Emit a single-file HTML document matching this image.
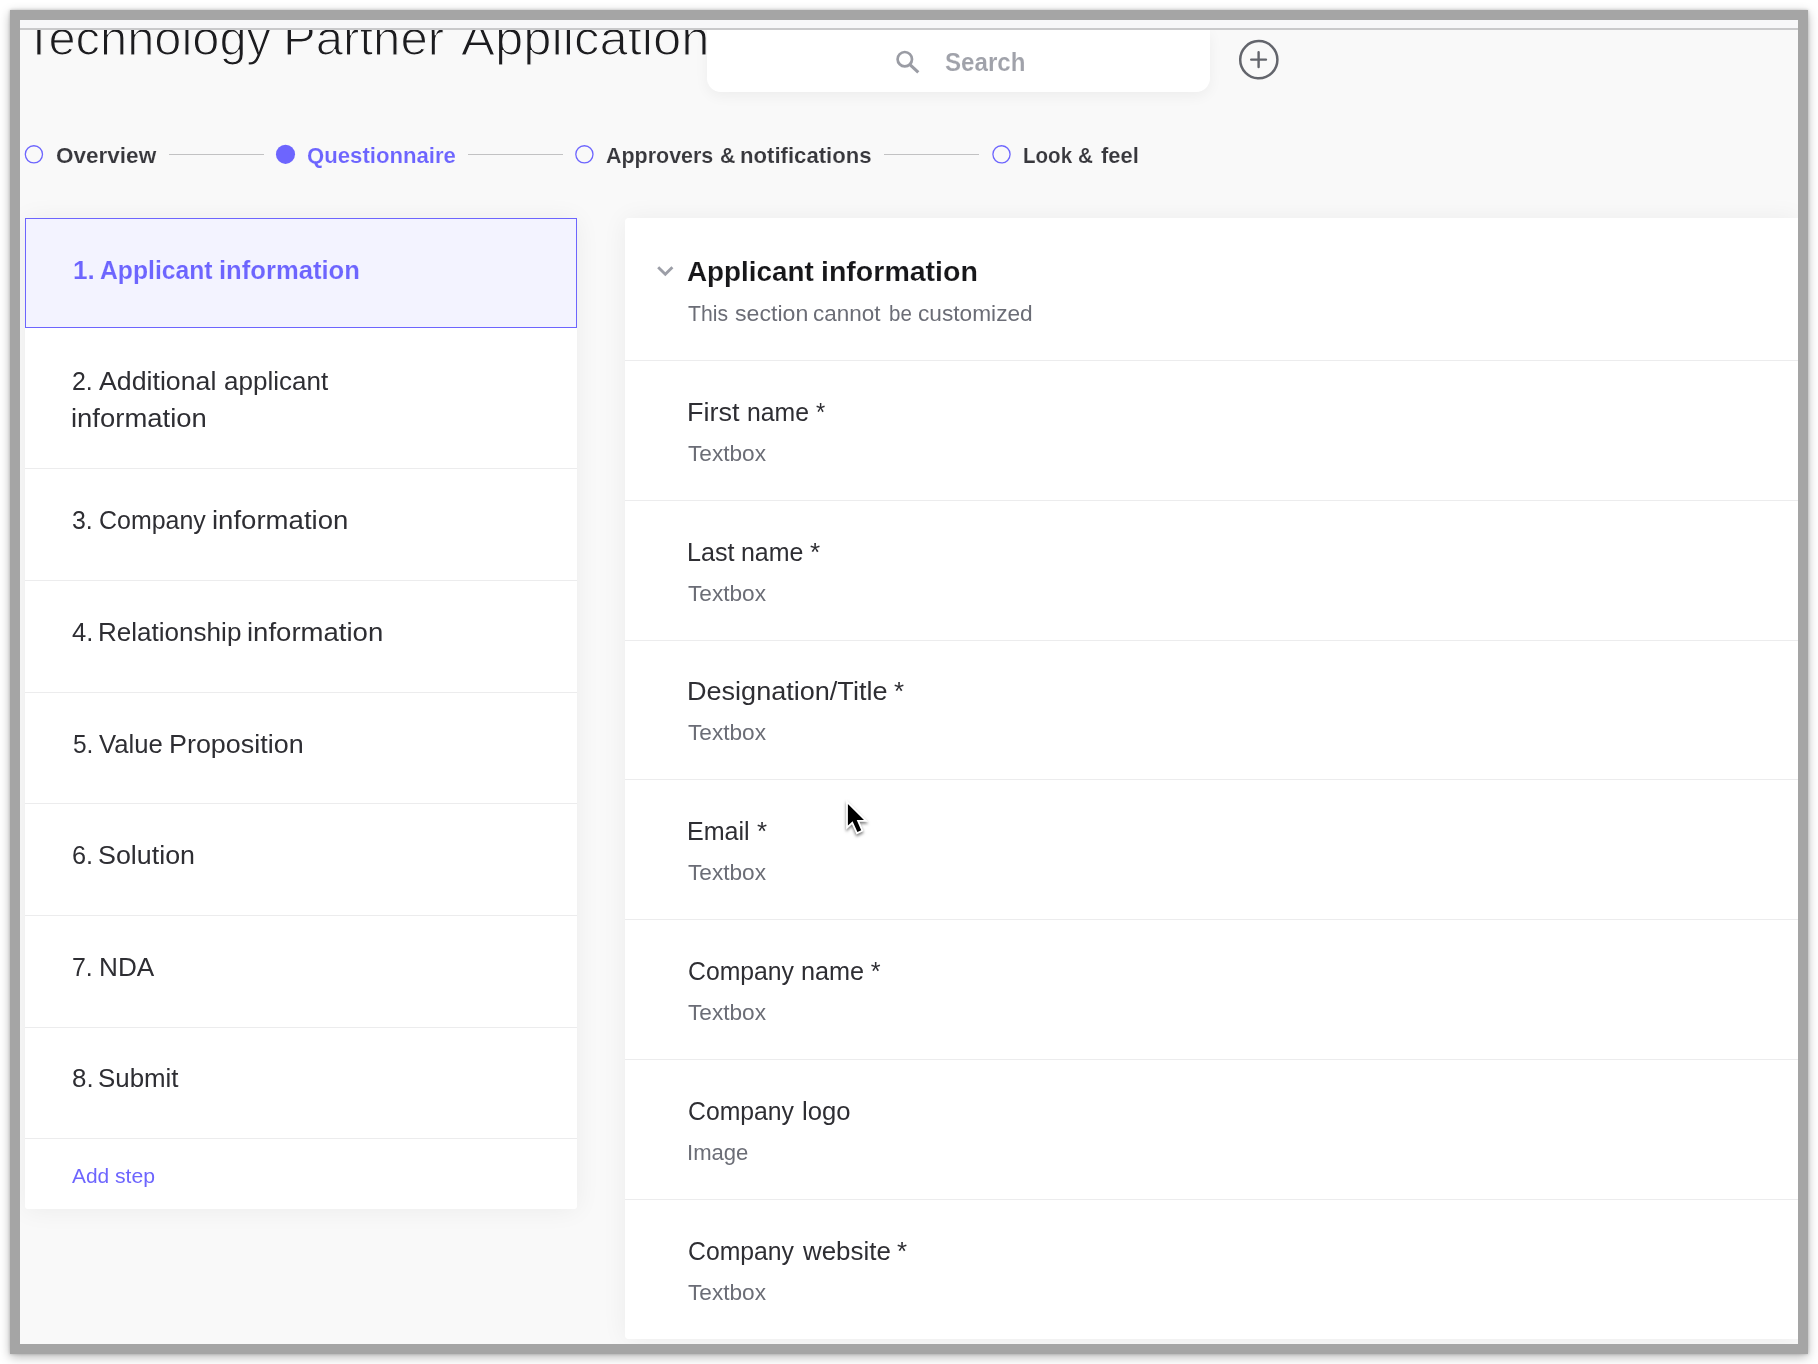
<!DOCTYPE html><html lang="en"><head><meta charset="utf-8"><title>Technology Partner Application</title><style>
*{box-sizing:border-box;margin:0;padding:0}
html,body{width:1818px;height:1364px;overflow:hidden;background:#fff}
body{position:relative;font-family:"Liberation Sans",sans-serif}
#frame{position:absolute;left:10px;top:10px;width:1798px;height:1344px;border:10px solid #a5a5a5;background:#f9f9f9;box-shadow:0 3px 10px rgba(0,0,0,.28),0 0 3px rgba(0,0,0,.2);overflow:hidden}
#in{position:absolute;left:-20px;top:-20px;width:1818px;height:1364px;will-change:transform}
.abs{position:absolute}
.tx{position:absolute;white-space:nowrap;transform-origin:0 0;line-height:1;display:block}
</style></head><body>
<div id="frame"><div id="in">
<div class="abs" style="z-index:5;left:20px;top:20px;width:1778px;height:8px;background:#f7f7f9"></div>
<div class="abs" style="z-index:5;left:20px;top:28px;width:1778px;height:2px;background:#c9c9cb"></div>
<div class="abs" style="left:707px;top:30px;width:503px;height:62px;background:#fff;border-radius:0 0 14px 14px;box-shadow:0 4px 14px rgba(0,0,0,.05)"></div>
<svg class="abs" style="left:890px;top:45px" width="36" height="36" viewBox="0 0 36 36"><circle cx="14.8" cy="14.2" r="7.2" fill="none" stroke="#9a9ca4" stroke-width="2.7"/><path d="M20.2 19.8 L28.3 27.4" stroke="#9a9ca4" stroke-width="3.1" fill="none"/></svg>
<svg class="abs" style="left:1236px;top:38px" width="44" height="44" viewBox="0 0 44 44"><circle cx="22.8" cy="21.7" r="18.6" fill="none" stroke="#63656c" stroke-width="2.5"/><path d="M15.2 21.6H30M22.6 14.2V29" stroke="#63656c" stroke-width="2.4" stroke-linecap="round" fill="none"/></svg>
<svg class="abs" style="left:20px;top:140px" width="1000" height="30" viewBox="20 140 1000 30"><circle cx="33.9" cy="154.35" r="8.6" fill="none" stroke="#6d65fe" stroke-width="1.3"/><circle cx="285.5" cy="154.35" r="9.55" fill="#6d65fe"/><circle cx="584.4" cy="154.35" r="8.6" fill="none" stroke="#6d65fe" stroke-width="1.3"/><circle cx="1001.5" cy="154.35" r="8.6" fill="none" stroke="#6d65fe" stroke-width="1.3"/></svg>
<div class="abs" style="left:169px;top:154px;width:95px;height:1px;background:#c2c2c3"></div>
<div class="abs" style="left:468px;top:154px;width:95px;height:1px;background:#c2c2c3"></div>
<div class="abs" style="left:884px;top:154px;width:94.5px;height:1px;background:#c2c2c3"></div>
<div class="abs" style="left:25px;top:218px;width:552px;height:991px;background:#fff;border-radius:3px;box-shadow:0 1px 26px rgba(0,0,0,.06)"></div>
<div class="abs" style="left:25px;top:218px;width:552px;height:110px;background:#f3f3ff;border:1px solid #6d65fe"></div>
<div class="abs" style="left:25px;top:468px;width:552px;height:1px;background:#ececed"></div>
<div class="abs" style="left:25px;top:580px;width:552px;height:1px;background:#ececed"></div>
<div class="abs" style="left:25px;top:692px;width:552px;height:1px;background:#ececed"></div>
<div class="abs" style="left:25px;top:803px;width:552px;height:1px;background:#ececed"></div>
<div class="abs" style="left:25px;top:915px;width:552px;height:1px;background:#ececed"></div>
<div class="abs" style="left:25px;top:1027px;width:552px;height:1px;background:#ececed"></div>
<div class="abs" style="left:25px;top:1138px;width:552px;height:1px;background:#ececed"></div>
<div class="abs" style="left:625px;top:218px;width:1173px;height:1121px;background:#fff;border-radius:4px 0 0 4px;box-shadow:0 1px 26px rgba(0,0,0,.06)"></div>
<div class="abs" style="left:625px;top:360px;width:1173px;height:1px;background:#ececed"></div>
<div class="abs" style="left:625px;top:500px;width:1173px;height:1px;background:#ececed"></div>
<div class="abs" style="left:625px;top:640px;width:1173px;height:1px;background:#ececed"></div>
<div class="abs" style="left:625px;top:779px;width:1173px;height:1px;background:#ececed"></div>
<div class="abs" style="left:625px;top:919px;width:1173px;height:1px;background:#ececed"></div>
<div class="abs" style="left:625px;top:1059px;width:1173px;height:1px;background:#ececed"></div>
<div class="abs" style="left:625px;top:1199px;width:1173px;height:1px;background:#ececed"></div>
<svg class="abs" style="left:650px;top:258px" width="30" height="26" viewBox="0 0 30 26"><path d="M8.2 9.2 L15.3 16.2 L22.4 9.2" fill="none" stroke="#9c9ea7" stroke-width="2.9"/></svg>
<div class="ln">
<span class="tx" style="left:24.34px;top:15.09px;font-size:47.5px;font-weight:400;color:#1c1c1f;transform:scaleX(1.0279);-webkit-text-stroke:1.2px #f9f9f9">Technology</span>
 
<span class="tx" style="left:283.43px;top:15.09px;font-size:47.5px;font-weight:400;color:#1c1c1f;transform:scaleX(1.0342);-webkit-text-stroke:1.2px #f9f9f9">Partner</span>
 
<span class="tx" style="left:460.83px;top:15.09px;font-size:47.5px;font-weight:400;color:#1c1c1f;transform:scaleX(1.0697);-webkit-text-stroke:1.2px #f9f9f9">Application</span>
</div>
<div class="ln">
<span class="tx" style="left:944.87px;top:49.09px;font-size:26px;font-weight:700;color:#a0a2aa;transform:scaleX(0.9274);-webkit-text-stroke:0.12px #fff">Search</span>
</div>
<div class="ln">
<span class="tx" style="left:55.71px;top:143.84px;font-size:22.75px;font-weight:700;color:#38383d;transform:scaleX(0.9900);-webkit-text-stroke:0.12px #f9f9f9">Overview</span>
</div>
<div class="ln">
<span class="tx" style="left:307.03px;top:143.84px;font-size:22.75px;font-weight:700;color:#6d65fe;transform:scaleX(0.9735);-webkit-text-stroke:0.12px #f9f9f9">Questionnaire</span>
</div>
<div class="ln">
<span class="tx" style="left:606.46px;top:143.84px;font-size:22.75px;font-weight:700;color:#38383d;transform:scaleX(0.9429);-webkit-text-stroke:0.12px #f9f9f9">Approvers</span>
 
<span class="tx" style="left:719.57px;top:143.84px;font-size:22.75px;font-weight:700;color:#38383d;transform:scaleX(0.9333);-webkit-text-stroke:0.12px #f9f9f9">&amp;</span>
 
<span class="tx" style="left:740.25px;top:143.84px;font-size:22.75px;font-weight:700;color:#38383d;transform:scaleX(0.9727);-webkit-text-stroke:0.12px #f9f9f9">notifications</span>
</div>
<div class="ln">
<span class="tx" style="left:1022.79px;top:143.84px;font-size:22.75px;font-weight:700;color:#38383d;transform:scaleX(0.9038);-webkit-text-stroke:0.12px #f9f9f9">Look</span>
 
<span class="tx" style="left:1078.39px;top:143.84px;font-size:22.75px;font-weight:700;color:#38383d;transform:scaleX(0.9067);-webkit-text-stroke:0.12px #f9f9f9">&amp;</span>
 
<span class="tx" style="left:1100.80px;top:143.84px;font-size:22.75px;font-weight:700;color:#38383d;transform:scaleX(0.9632);-webkit-text-stroke:0.12px #f9f9f9">feel</span>
</div>
<div class="ln">
<span class="tx" style="left:72.99px;top:257.29px;font-size:26px;font-weight:700;color:#6d65fe;transform:scaleX(1.0056);-webkit-text-stroke:0.12px #f3f3ff">1.</span>
 
<span class="tx" style="left:99.55px;top:257.29px;font-size:26px;font-weight:700;color:#6d65fe;transform:scaleX(0.9504);-webkit-text-stroke:0.12px #f3f3ff">Applicant</span>
 
<span class="tx" style="left:218.53px;top:257.29px;font-size:26px;font-weight:700;color:#6d65fe;transform:scaleX(0.9856);-webkit-text-stroke:0.12px #f3f3ff">information</span>
</div>
<div class="ln">
<span class="tx" style="left:72.24px;top:368.29px;font-size:26px;font-weight:400;color:#2e2e33;transform:scaleX(0.9579)">2.</span>
 
<span class="tx" style="left:99.30px;top:368.29px;font-size:26px;font-weight:400;color:#2e2e33;transform:scaleX(1.0274)">Additional</span>
 
<span class="tx" style="left:224.00px;top:368.29px;font-size:26px;font-weight:400;color:#2e2e33;transform:scaleX(1.0010)">applicant</span>
</div>
<div class="ln">
<span class="tx" style="left:71.39px;top:404.79px;font-size:26px;font-weight:400;color:#2e2e33;transform:scaleX(1.0560)">information</span>
</div>
<div class="ln">
<span class="tx" style="left:72.24px;top:507.09px;font-size:26px;font-weight:400;color:#2e2e33;transform:scaleX(0.9579)">3.</span>
 
<span class="tx" style="left:98.64px;top:507.09px;font-size:26px;font-weight:400;color:#2e2e33;transform:scaleX(0.9600)">Company</span>
 
<span class="tx" style="left:212.18px;top:507.09px;font-size:26px;font-weight:400;color:#2e2e33;transform:scaleX(1.0600)">information</span>
</div>
<div class="ln">
<span class="tx" style="left:71.72px;top:618.89px;font-size:26px;font-weight:400;color:#2e2e33;transform:scaleX(0.9842)">4.</span>
 
<span class="tx" style="left:98.20px;top:618.89px;font-size:26px;font-weight:400;color:#2e2e33;transform:scaleX(1.0021)">Relationship</span>
 
<span class="tx" style="left:247.18px;top:618.89px;font-size:26px;font-weight:400;color:#2e2e33;transform:scaleX(1.0592)">information</span>
</div>
<div class="ln">
<span class="tx" style="left:72.56px;top:730.69px;font-size:26px;font-weight:400;color:#2e2e33;transform:scaleX(0.9421)">5.</span>
 
<span class="tx" style="left:99.30px;top:730.69px;font-size:26px;font-weight:400;color:#2e2e33;transform:scaleX(0.9873)">Value</span>
 
<span class="tx" style="left:168.83px;top:730.69px;font-size:26px;font-weight:400;color:#2e2e33;transform:scaleX(1.0349)">Proposition</span>
</div>
<div class="ln">
<span class="tx" style="left:71.93px;top:842.09px;font-size:26px;font-weight:400;color:#2e2e33;transform:scaleX(0.9737)">6.</span>
 
<span class="tx" style="left:97.54px;top:842.09px;font-size:26px;font-weight:400;color:#2e2e33;transform:scaleX(1.0322)">Solution</span>
</div>
<div class="ln">
<span class="tx" style="left:72.24px;top:953.69px;font-size:26px;font-weight:400;color:#2e2e33;transform:scaleX(0.9579)">7.</span>
 
<span class="tx" style="left:98.79px;top:953.69px;font-size:26px;font-weight:400;color:#2e2e33;transform:scaleX(1.0057)">NDA</span>
</div>
<div class="ln">
<span class="tx" style="left:71.51px;top:1065.09px;font-size:26px;font-weight:400;color:#2e2e33;transform:scaleX(0.9947)">8.</span>
 
<span class="tx" style="left:97.61px;top:1065.09px;font-size:26px;font-weight:400;color:#2e2e33;transform:scaleX(0.9949)">Submit</span>
</div>
<div class="ln">
<span class="tx" style="left:72.10px;top:1165.62px;font-size:20.3px;font-weight:400;color:#6d65fe;transform:scaleX(1.0314)">Add</span>
 
<span class="tx" style="left:115.05px;top:1165.62px;font-size:20.3px;font-weight:400;color:#6d65fe;transform:scaleX(1.0459)">step</span>
</div>
<div class="ln">
<span class="tx" style="left:686.99px;top:258.34px;font-size:27.6px;font-weight:700;color:#17171a;transform:scaleX(1.0089);-webkit-text-stroke:0.12px #fff">Applicant</span>
 
<span class="tx" style="left:820.83px;top:258.34px;font-size:27.6px;font-weight:700;color:#17171a;transform:scaleX(1.0338);-webkit-text-stroke:0.12px #fff">information</span>
</div>
<div class="ln">
<span class="tx" style="left:688.30px;top:303.33px;font-size:21.94px;font-weight:400;color:#6b6d76;transform:scaleX(0.9659)">This</span>
 
<span class="tx" style="left:734.75px;top:303.33px;font-size:21.94px;font-weight:400;color:#6b6d76;transform:scaleX(1.0537)">section</span>
 
<span class="tx" style="left:813.28px;top:303.33px;font-size:21.94px;font-weight:400;color:#6b6d76;transform:scaleX(1.0246)">cannot</span>
 
<span class="tx" style="left:888.87px;top:303.33px;font-size:21.94px;font-weight:400;color:#6b6d76;transform:scaleX(0.9348)">be</span>
 
<span class="tx" style="left:917.77px;top:303.33px;font-size:21.94px;font-weight:400;color:#6b6d76;transform:scaleX(1.0339)">customized</span>
</div>
<div class="ln">
<span class="tx" style="left:687.36px;top:400.47px;font-size:25.2px;font-weight:400;color:#2e2e33;transform:scaleX(1.0723)">First</span>
 
<span class="tx" style="left:747.13px;top:400.47px;font-size:25.2px;font-weight:400;color:#2e2e33;transform:scaleX(0.9833)">name</span>
 
<span class="tx" style="left:815.96px;top:400.47px;font-size:25.2px;font-weight:400;color:#2e2e33;transform:scaleX(0.9375)">*</span>
</div>
<div class="ln">
<span class="tx" style="left:688.20px;top:443.23px;font-size:21.94px;font-weight:400;color:#6b6d76;transform:scaleX(1.0320)">Textbox</span>
</div>
<div class="ln">
<span class="tx" style="left:687.00px;top:540.27px;font-size:25.2px;font-weight:400;color:#2e2e33;transform:scaleX(0.9978)">Last</span>
 
<span class="tx" style="left:741.12px;top:540.27px;font-size:25.2px;font-weight:400;color:#2e2e33;transform:scaleX(0.9900)">name</span>
 
<span class="tx" style="left:809.96px;top:540.27px;font-size:25.2px;font-weight:400;color:#2e2e33;transform:scaleX(1.0375)">*</span>
</div>
<div class="ln">
<span class="tx" style="left:688.20px;top:583.03px;font-size:21.94px;font-weight:400;color:#6b6d76;transform:scaleX(1.0320)">Textbox</span>
</div>
<div class="ln">
<span class="tx" style="left:686.85px;top:679.07px;font-size:25.2px;font-weight:400;color:#2e2e33;transform:scaleX(1.0739)">Designation/Title</span>
 
<span class="tx" style="left:893.88px;top:679.07px;font-size:25.2px;font-weight:400;color:#2e2e33;transform:scaleX(1.0250)">*</span>
</div>
<div class="ln">
<span class="tx" style="left:688.20px;top:721.83px;font-size:21.94px;font-weight:400;color:#6b6d76;transform:scaleX(1.0320)">Textbox</span>
</div>
<div class="ln">
<span class="tx" style="left:687.21px;top:818.87px;font-size:25.2px;font-weight:400;color:#2e2e33;transform:scaleX(0.9950)">Email</span>
 
<span class="tx" style="left:756.88px;top:818.87px;font-size:25.2px;font-weight:400;color:#2e2e33;transform:scaleX(1.0250)">*</span>
</div>
<div class="ln">
<span class="tx" style="left:688.20px;top:861.63px;font-size:21.94px;font-weight:400;color:#6b6d76;transform:scaleX(1.0320)">Textbox</span>
</div>
<div class="ln">
<span class="tx" style="left:687.62px;top:958.67px;font-size:25.2px;font-weight:400;color:#2e2e33;transform:scaleX(0.9832)">Company</span>
 
<span class="tx" style="left:801.40px;top:958.67px;font-size:25.2px;font-weight:400;color:#2e2e33;transform:scaleX(1.0017)">name</span>
 
<span class="tx" style="left:870.70px;top:958.67px;font-size:25.2px;font-weight:400;color:#2e2e33;transform:scaleX(1.0000)">*</span>
</div>
<div class="ln">
<span class="tx" style="left:688.20px;top:1002.43px;font-size:21.94px;font-weight:400;color:#6b6d76;transform:scaleX(1.0320)">Textbox</span>
</div>
<div class="ln">
<span class="tx" style="left:687.62px;top:1099.47px;font-size:25.2px;font-weight:400;color:#2e2e33;transform:scaleX(0.9832)">Company</span>
 
<span class="tx" style="left:801.76px;top:1099.47px;font-size:25.2px;font-weight:400;color:#2e2e33;transform:scaleX(1.0178)">logo</span>
</div>
<div class="ln">
<span class="tx" style="left:687.19px;top:1142.23px;font-size:21.94px;font-weight:400;color:#6b6d76;transform:scaleX(1.0069)">Image</span>
</div>
<div class="ln">
<span class="tx" style="left:687.62px;top:1239.27px;font-size:25.2px;font-weight:400;color:#2e2e33;transform:scaleX(0.9832)">Company</span>
 
<span class="tx" style="left:802.80px;top:1239.27px;font-size:25.2px;font-weight:400;color:#2e2e33;transform:scaleX(1.0282)">website</span>
 
<span class="tx" style="left:897.48px;top:1239.27px;font-size:25.2px;font-weight:400;color:#2e2e33;transform:scaleX(1.0250)">*</span>
</div>
<div class="ln">
<span class="tx" style="left:688.20px;top:1282.03px;font-size:21.94px;font-weight:400;color:#6b6d76;transform:scaleX(1.0320)">Textbox</span>
</div>
<svg class="abs" style="left:838px;top:794px;filter:drop-shadow(0 2px 1.6px rgba(0,0,0,.5))" width="40" height="50" viewBox="0 0 40 50"><path d="M9.9 9.9 L9.9 31.6 L14.6 27.2 L19.4 38 L23.2 36.2 L18.7 26 L26 25.9 Z" fill="#fff" stroke="#fff" stroke-width="3.6" stroke-linejoin="miter"/><path d="M9.9 9.9 L9.9 31.6 L14.6 27.2 L19.4 38 L23.2 36.2 L18.7 26 L26 25.9 Z" fill="#000"/></svg>
</div></div></body></html>
